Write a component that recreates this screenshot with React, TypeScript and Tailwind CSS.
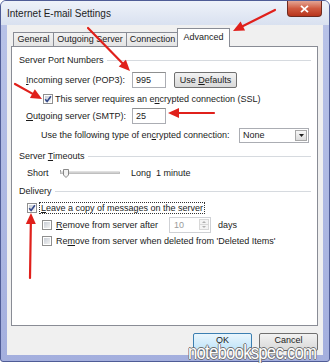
import React from "react";

type Line = { x1: number; y1: number; x2: number; y2: number };

// red annotation arrows drawn over the dialog
function Arrow({ x1, y1, x2, y2 }: Line) {
  const dx = x2 - x1;
  const dy = y2 - y1;
  const len = Math.hypot(dx, dy);
  const ux = dx / len;
  const uy = dy / len;
  const hl = 11;
  const hw = 5;
  const bx = x2 - ux * hl;
  const by = y2 - uy * hl;
  const pts = `${x2},${y2} ${bx - uy * hw},${by + ux * hw} ${bx + uy * hw},${by - ux * hw}`;
  return (
    <g>
      <line x1={x1} y1={y1} x2={bx + ux * 2} y2={by + uy * 2} stroke="#e0201b" strokeWidth={2.2} strokeLinecap="round" />
      <polygon points={pts} fill="#e0201b" />
    </g>
  );
}

const arrows: Line[] = [
  { x1: 88, y1: 28, x2: 130, y2: 71 },
  { x1: 275, y1: 10, x2: 233, y2: 31 },
  { x1: 15, y1: 84, x2: 42, y2: 99 },
  { x1: 214, y1: 113, x2: 168, y2: 113 },
  { x1: 30, y1: 278, x2: 31, y2: 213 },
];

function Check({ on }: { on?: boolean }) {
  return (
    <span className="relative flex h-[10px] w-[10px] shrink-0 items-center justify-center border border-[#8f8f8f] bg-white">
      <span className="h-[6px] w-[6px] bg-linear-to-br from-[#c9ced6] to-[#f3f3f3]" />
      {on && (
        <svg className="absolute left-[0px] top-[0px]" width="8" height="8" viewBox="0 0 8 8">
          <path d="M1.2 4.2 L3.1 6.4 L6.9 1.2" fill="none" stroke="#34498a" strokeWidth="1.6" />
        </svg>
      )}
    </span>
  );
}

function GroupHead({ children }: { children: React.ReactNode }) {
  return (
    <div className="flex h-[14px] items-center pl-[7px] pr-[6px]">
      <span>{children}</span>
      <span className="ml-[3px] h-px flex-1 bg-[#d6dadf]" />
    </div>
  );
}

const U = ({ c }: { c: string }) => <span className="underline underline-offset-[1px]">{c}</span>;

export default function App() {
  return (
    <div className="relative h-[363px] w-[330px] bg-white font-['Liberation_Sans',Arial,sans-serif] text-[9px] leading-[11px] text-[#1b1b1b]">
      <div className="flex h-[362px] w-[330px] flex-col rounded-t-[6px] rounded-b-[3px] border border-[#4f5c96] bg-linear-to-b from-[#b9c3e8] to-[#a4afde]">
        {/* title bar */}
        <div className="flex h-[24px] shrink-0 justify-between rounded-t-[5px] bg-linear-to-b from-[#eef2f9] to-[#d9e1f0]">
          <span className="self-center pl-[6px] pt-[1px] text-[10px] text-[#1e1e1e]">Internet E-mail Settings</span>
          <div className="mr-[7px] flex h-[16px] w-[35px] items-center justify-center rounded-b-[4px] border border-t-0 border-[#6e2a1f] bg-linear-to-b from-[#e3a594] via-[#cf5a40] to-[#b8341b]">
            <svg width="9" height="8" viewBox="0 0 9 8">
              <path d="M1 0.8 L8 7.2 M8 0.8 L1 7.2" stroke="#fff" strokeWidth="1.8" />
            </svg>
          </div>
        </div>

        {/* client area */}
        <div className="mx-[6px] flex h-[330px] flex-col bg-[#f0f0f0] pt-[3px]">
          {/* tabs */}
          <div className="ml-[6px] flex h-[18px] items-end">
            <div className="flex h-[14px] w-[41px] items-center justify-center border border-b-0 border-[#898c95] bg-linear-to-b from-[#f3f3f3] to-[#e4e4e4]">General</div>
            <div className="-ml-px flex h-[14px] w-[74px] items-center justify-center border border-b-0 border-[#898c95] bg-linear-to-b from-[#f3f3f3] to-[#e4e4e4]">Outgoing Server</div>
            <div className="-ml-px flex h-[14px] w-[53px] items-center justify-center border border-b-0 border-[#898c95] bg-linear-to-b from-[#f3f3f3] to-[#e4e4e4]">Connection</div>
            <div className="relative z-10 -mb-px -ml-[2px] flex h-[19px] w-[53px] items-start justify-center border border-b-0 border-[#898c95] bg-white pt-[3px]">Advanced</div>
          </div>

          {/* tab panel */}
          <div className="ml-[4px] flex h-[280px] w-[307px] flex-col border border-[#898c95] bg-white">
            <div className="mt-[6px]">
              <GroupHead>Server Port Numbers</GroupHead>
            </div>

            <div className="mt-[5px] flex h-[16px] items-center pl-[14px]">
              <span className="w-[106px]">
                <U c="I" />ncoming server (POP3):
              </span>
              <div className="flex h-[16px] w-[34px] items-center border border-[#abadb3] border-t-[#8e8f8f] bg-white pl-[3px]">995</div>
              <div className="ml-[8px] flex h-[16px] w-[63px] items-center justify-center rounded-[2px] border border-[#707070] bg-linear-to-b from-[#f2f2f2] to-[#d9d9d9]">
                Use&nbsp;<U c="D" />efaults
              </div>
            </div>

            <div className="mt-[4px] flex h-[14px] items-center pl-[31px]">
              <Check on />
              <span className="ml-[2px]">
                This server requires an e<U c="n" />crypted connection (SSL)
              </span>
            </div>

            <div className="mt-[2px] flex h-[16px] items-center pl-[14px]">
              <span className="w-[106px]">
                <U c="O" />utgoing server (SMTP):
              </span>
              <div className="flex h-[16px] w-[34px] items-center border border-[#abadb3] border-t-[#8e8f8f] bg-white pl-[3px]">25</div>
            </div>

            <div className="mt-[4px] flex h-[15px] items-center pl-[29px]">
              <span className="w-[198px]">
                Use the following type of en<U c="c" />rypted connection:
              </span>
              <div className="flex h-[15px] w-[70px] items-center border border-[#abadb3] bg-white pl-[3px]">
                <span className="flex-1">None</span>
                <span className="mr-[1px] flex h-[11px] w-[12px] items-center justify-center border border-[#a8a8a8] bg-linear-to-b from-[#f7f7f7] to-[#dcdcdc]">
                  <svg width="5" height="3" viewBox="0 0 5 3">
                    <path d="M0 0 H5 L2.5 3 Z" fill="#1e1e1e" />
                  </svg>
                </span>
              </div>
            </div>

            <div className="mt-[6px]">
              <GroupHead>
                Server <U c="T" />imeouts
              </GroupHead>
            </div>

            <div className="mt-[3px] flex h-[14px] items-center pl-[15px]">
              <span className="w-[33px]">Short</span>
              <svg width="60" height="12" viewBox="0 0 60 12">
                <line x1="0.5" y1="3" x2="0.5" y2="6" stroke="#9a9a9a" />
                <rect x="0.5" y="5" width="59" height="1.6" fill="#e4e4e4" stroke="#b3b3b3" strokeWidth="0.8" />
                <path d="M3.5 2.5 H8.5 V8 L6 10.5 L3.5 8 Z" fill="#f2f2f2" stroke="#7a7a7a" strokeWidth="0.9" />
              </svg>
              <span className="ml-[11px]">Long</span>
              <span className="ml-[5px]">1 minute</span>
            </div>

            <div className="mt-[4px]">
              <GroupHead>Delivery</GroupHead>
            </div>

            <div className="mt-[3px] flex h-[13px] items-center pl-[15px]">
              <Check on />
              <span className="ml-[2px] border border-dotted border-[#333] px-px leading-[10px]">
                <U c="L" />eave a copy of messages on the server
              </span>
            </div>

            <div className="mt-[3px] flex h-[16px] items-center pl-[30px]">
              <Check />
              <span className="ml-[4px] w-[113px]">
                <U c="R" />emove from server after
              </span>
              <div className="flex h-[16px] w-[42px] items-center border border-[#cfd1d5] bg-white pl-[4px] text-[#9a9a9a]">
                <span className="flex-1">10</span>
                <div className="mr-px flex h-[12px] w-[10px] flex-col">
                  <span className="flex h-[6px] items-center justify-center border border-[#d8d8d8] bg-[#f4f4f4]">
                    <svg width="4" height="2" viewBox="0 0 4 2">
                      <path d="M0 2 H4 L2 0 Z" fill="#b0b0b0" />
                    </svg>
                  </span>
                  <span className="-mt-px flex h-[6px] items-center justify-center border border-[#d8d8d8] bg-[#f4f4f4]">
                    <svg width="4" height="2" viewBox="0 0 4 2">
                      <path d="M0 0 H4 L2 2 Z" fill="#b0b0b0" />
                    </svg>
                  </span>
                </div>
              </div>
              <span className="ml-[7px]">days</span>
            </div>

            <div className="mt-[1px] flex h-[14px] items-center pl-[30px]">
              <Check />
              <span className="ml-[4px]">
                Re<U c="m" />ove from server when deleted from 'Deleted Items'
              </span>
            </div>
          </div>

          {/* dialog buttons */}
          <div className="mt-[7px] flex justify-end gap-[7px] pr-[5px]">
            <div className="flex h-[18px] w-[59px] items-center justify-center rounded-[2px] border border-[#3c7fb1] bg-linear-to-b from-[#eaf6fd] to-[#bfe4f9] pb-[4px]">OK</div>
            <div className="flex h-[18px] w-[59px] items-center justify-center rounded-[2px] border border-[#707070] bg-linear-to-b from-[#f2f2f2] to-[#d9d9d9] pb-[4px]">Cancel</div>
          </div>
        </div>
      </div>

      {/* watermark */}
      <div className="pointer-events-none absolute left-[188px] top-[341px] origin-left scale-x-[0.8] text-[21px] leading-none tracking-[-1px] text-white [text-shadow:1px_0_#6f6f6f,-1px_0_#6f6f6f,0_1px_#6f6f6f,0_-1px_#6f6f6f]">
        notebookspec.com
      </div>

      <svg className="pointer-events-none absolute left-0 top-0" width="330" height="363" viewBox="0 0 330 363">
        {arrows.map((a, i) => (
          <Arrow key={i} {...a} />
        ))}
      </svg>
    </div>
  );
}
